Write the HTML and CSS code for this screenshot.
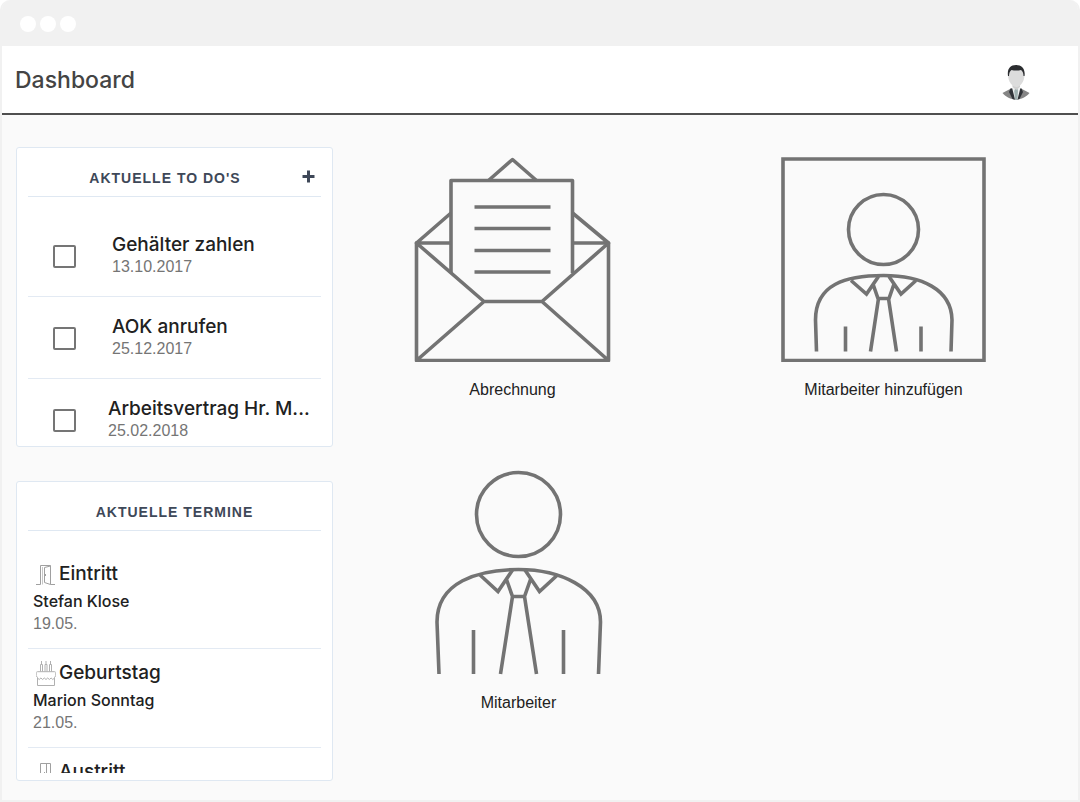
FILE: index.html
```html
<!DOCTYPE html>
<html lang="de">
<head>
<meta charset="utf-8">
<meta name="viewport" content="width=device-width, initial-scale=1">
<title>Dashboard</title>
<link rel="stylesheet" href="styles.css">
</head>
<body>
<div class="window">
  <div class="titlebar"><span class="dot"></span><span class="dot"></span><span class="dot"></span></div>
  <header class="header">
    <h1 class="header-title">Dashboard</h1>
    <svg class="avatar" viewBox="0 0 28 36" role="img" aria-label="Profil">
      <path d="M.5 29 9 24.500h10l8.500 4.500C24 33 19.500 35.500 14 35.500S4 33 .5 29z" fill="#858585"/>
      <path d="M8.500 24.500 7 28l3.500 7q3.500 1 7 0L21 28l-1.500-3.500z" fill="#303338"/>
      <path d="M10 23.500 13 35.500h2.500L18.500 23.500z" fill="#eef0f0"/>
      <path d="M13 25h2.500l.5 2-.5 8.500H13l-.800-8.500z" fill="#9fb0b0"/>
      <path d="M10.500 19h7.500v4l-3.700 3-3.800-3z" fill="#cfcfcf"/>
      <path d="M6 11C6 4 9 2.500 14 2.500S22.500 4 22.500 11c0 6-4 12-8.200 12S6 17 6 11z" fill="#dcdcdc"/>
      <path d="M6 12C5 5 8 1 14 1s9.500 4 8.500 11l-1 0c0-3-1-5-2.500-6-3 .8-6.500.8-9.500 0C8 7 7 9 7 12z" fill="#2b2d30"/>
    </svg>
  </header>
  <main class="main">
    <div class="sidebar">
      <section class="card">
        <div class="card-head">
          <h2 class="card-title">AKTUELLE TO DO'S</h2>
          <button class="add" type="button" aria-label="To Do hinzufügen">
            <svg viewBox="0 0 13 13"><path d="M5 .5h3V5h4.500v3H8v4.500H5V8H.5V5H5z" fill="#3e4858"/></svg>
          </button>
        </div>
        <ul class="list">
          <li><label class="todo"><input class="check" type="checkbox"><span class="todo-text"><span class="item-title">Gehälter zahlen</span><span class="date">13.10.2017</span></span></label></li>
          <li><label class="todo"><input class="check" type="checkbox"><span class="todo-text"><span class="item-title">AOK anrufen</span><span class="date">25.12.2017</span></span></label></li>
          <li><label class="todo todo-long"><input class="check" type="checkbox"><span class="todo-text"><span class="item-title">Arbeitsvertrag Hr. M...</span><span class="date">25.02.2018</span></span></label></li>
        </ul>
      </section>
      <section class="card card-events">
        <div class="card-head"><h2 class="card-title">AKTUELLE TERMINE</h2></div>
        <ul class="list events">
          <li class="event">
            <h3 class="event-title"><svg class="event-icon" viewBox="0 0 20 26"><g fill="none" stroke="#a0a0a0"><path d="M0 23.500h4.500v-19h10v19H19"/><path d="M6.500 23.500v-17.500" stroke="#c8c8c8"/><path d="M14.500 5 8.500 6.500v15l6 2M9.500 13v2"/></g></svg>Eintritt</h3>
            <p class="event-name">Stefan Klose</p>
            <p class="date">19.05.</p>
          </li>
          <li class="event">
            <h3 class="event-title"><svg class="event-icon" viewBox="0 0 20 26"><g fill="none" stroke="#b0b0b0"><path d="M1.500 25.500v-8q-2-1-1.300-5 .3-.8 1.300-.8h17q1 0 1.300.8.5 4-1.300 5v8z"/><path d="M1.500 18q1.700 3 3.400 0 1.700 3 3.400 0 1.700 3 3.400 0 1.700 3 3.400 0 1.700 3 3.400 0M4.500 11.500v-7h2v7M9 11.500v-7h2v7M13.500 11.500v-7h2v7M5.500 1v3M10 1v3M14.500 1v3"/></g></svg>Geburtstag</h3>
            <p class="event-name">Marion Sonntag</p>
            <p class="date">21.05.</p>
          </li>
          <li class="event">
            <h3 class="event-title"><svg class="event-icon" viewBox="0 0 20 26"><g fill="none" stroke="#a0a0a0"><path d="M0 23.500h4.500v-19h10v19H19"/><path d="M10.500 4.500v17l4 2M8.500 13v2"/></g></svg>Austritt</h3>
          </li>
        </ul>
      </section>
    </div>
    <nav class="tiles">
      <a class="tile" href="#abrechnung">
        <svg class="tile-icon" viewBox="2.5 0 205 205">
          <g fill="none" stroke="#737373" stroke-width="3.600" stroke-linejoin="round">
            <path d="M43.500 116V23.500H165V116"/>
            <path d="M81 23.500 105 2.500 129 23.500M43.500 56 9 86h34.500M165 56l36 30h-36"/>
            <path d="M9 86v117.500h192V86l-66.500 58.500H76.500zM9 203.500l67.500-59M201 203.500l-66.500-59"/>
            <path d="M67 50h76M67 71.500h76M67 93.500h76M67 115h76"/>
          </g>
        </svg>
        <span>Abrechnung</span>
      </a>
      <a class="tile" href="#hinzufuegen">
        <svg class="tile-icon" viewBox="0 0 205 205">
          <g fill="none" stroke="#737373" stroke-width="3.600">
            <path d="M2 2h201v201.500H2z"/>
            <circle cx="102.500" cy="72.500" r="35"/>
            <path d="M35.500 194.500 34.500 163C34.500 127 65 118.500 102.500 118.500S170.500 132 171 163l-1 31.500M64.500 169.500v25M140 169.500v25"/>
            <path d="M70 123.500 85.500 137 97.500 119.500M135 123.500 120 137 108 119.500M92 127l5 14.500h11l5-14.500M97.500 141.500 89.500 194.500M107.500 141.500l8 53"/>
          </g>
        </svg>
        <span>Mitarbeiter hinzufügen</span>
      </a>
      <a class="tile tile-staff" href="#mitarbeiter">
        <svg class="tile-icon" viewBox="0 0 205 205">
          <g fill="none" stroke="#737373" stroke-width="3.600">
            <circle cx="102.500" cy="44.500" r="42"/>
            <path d="M23 204 21 152C21 112 62 99.500 102.500 99.500S184.500 117 184.500 152l-2 52M57.500 160v44M147.500 160v44"/>
            <path d="M63.500 104.500 82 121.500 96.500 100M142 104.500 123.500 121.500 109 100M90.500 109.500l6 17h12l6-17M96.500 126.500 84.500 204M108.500 126.500l12 77.500"/>
          </g>
        </svg>
        <span>Mitarbeiter</span>
      </a>
    </nav>
  </main>
</div>
</body>
</html>
```
FILE: styles.css
```css
* { box-sizing: border-box; }
body {
  margin: 0;
  background: #fff;
  color: #212121;
  font-family: "Liberation Sans", Arial, sans-serif;
  font-size: 16px;
}
h1, h2, h3, p, ul { margin: 0; padding: 0; }
ul { list-style: none; }

.window {
  min-height: 100vh;
  border: 2px solid #f1f1f1;
  border-top: 0;
  border-radius: 10px 10px 0 0;
  background: #fafafa;
  overflow: hidden;
}
.titlebar {
  display: flex;
  align-items: center;
  gap: 4px;
  height: 46px;
  padding: 2px 18px 0;
  background: #f1f1f1;
}
.dot { width: 16px; height: 16px; border-radius: 50%; background: #fff; }

.header {
  display: flex;
  align-items: center;
  justify-content: space-between;
  height: 69px;
  padding: 4px 48px 0 13px;
  background: #fff;
  border-bottom: 2px solid #4f4f4f;
}
.header-title {
  padding-bottom: 4px;
  font-family: Inter, sans-serif;
  font-size: 23px;
  font-weight: 500;
  line-height: 32px;
  color: #444;
}
.avatar { width: 28px; height: 36px; }

.main {
  display: grid;
  grid-template-columns: minmax(240px, 317px) 1fr;
  gap: 10px;
  padding: 32px 25px 18px 14px;
}
.sidebar { display: flex; flex-direction: column; gap: 34px; }
.card {
  height: 300px;
  padding: 0 11px;
  border: 1px solid #dfe8f2;
  border-radius: 3px;
  background: #fff;
  overflow: hidden;
}
.card-head {
  display: flex;
  align-items: center;
  padding: 20px 0 8px;
  border-bottom: 1px solid #dfe8f2;
}
.card-title {
  flex: 1;
  text-align: center;
  font-size: 14px;
  font-weight: 700;
  line-height: 20px;
  letter-spacing: 1px;
  color: #3e4858;
}
.add {
  display: flex;
  width: 13px;
  height: 13px;
  margin: 0 6px 4px 0;
  padding: 0;
  border: 0;
  background: none;
}
.add svg { width: 13px; height: 13px; }

.list { padding-top: 18px; }
.list li { border-bottom: 1px solid #e3eaf3; }
.list li:last-child { border-bottom: 0; }
.todo {
  display: flex;
  align-items: center;
  gap: 36px;
  padding: 19px 10px 18px 25px;
}
.todo-long { gap: 32px; }
.check {
  appearance: none;
  flex: none;
  width: 23px;
  height: 23px;
  margin: 0;
  border: 2px solid #757575;
  border-radius: 2px;
  background: #fff;
}
.todo-text { display: flex; flex-direction: column; min-width: 0; }
.item-title, .event-title, .event-name {
  font-family: Inter, sans-serif;
  font-weight: 500;
}
.item-title {
  font-size: 19px;
  line-height: 22px;
  white-space: nowrap;
}
.date { font-size: 16px; line-height: 22px; color: #757575; }

.card-events { padding-bottom: 7px; }
.events { height: 242px; padding-top: 19px; overflow: hidden; }
.event { padding: 10px 5px 14px; }
.event-title {
  display: flex;
  align-items: center;
  gap: 3px;
  padding-left: 3px;
  font-size: 19px;
  line-height: 28px;
}
.event-icon { width: 20px; height: 26px; }
.event-name { font-size: 16px; line-height: 26px; }
.event .date { line-height: 20px; }

.tiles {
  display: grid;
  grid-template-columns: 1fr 1fr;
  align-content: start;
  gap: 70px 32px;
  padding-top: 10px;
}
.tile {
  display: flex;
  flex-direction: column;
  align-items: center;
  gap: 18px;
  color: #212121;
  line-height: 20px;
  text-decoration: none;
}
.tile-icon { width: 205px; height: 205px; }
.tile-staff { padding-left: 12px; }
```
